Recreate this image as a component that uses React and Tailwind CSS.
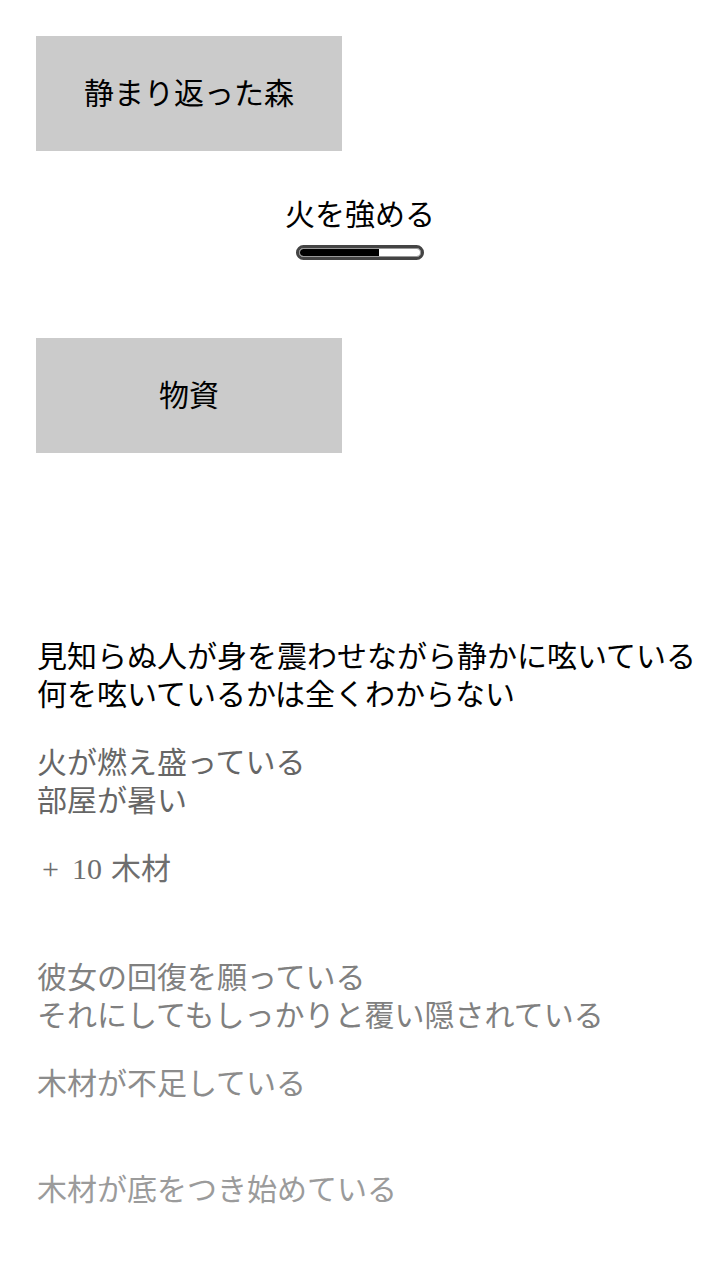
export default function App() {
  const jp = "font-['Noto_Sans_CJK_JP',sans-serif]";
  return (
    <div className={`w-[720px] h-[1280px] bg-white ${jp} text-[30px] leading-[38px] text-black`}>
      <div className="pt-[36px] pl-[36px]">
        <div className="w-[306px] h-[115px] bg-[#cbcbcb] flex items-center justify-center pb-[6px]">静まり返った森</div>
      </div>
      <div className="flex flex-col items-center mt-[42px]">
        <div>火を強める</div>
        <div className="mt-[14px] w-[128px] h-[15px] rounded-full border-[3px] border-[#444] bg-white overflow-hidden p-[1px] shadow-[inset_0_0_0_1px_#999]">
          <div className="h-full w-[66%] bg-black rounded-l-full"></div>
        </div>
      </div>
      <div className="pl-[36px] mt-[78px]">
        <div className="w-[306px] h-[115px] bg-[#cbcbcb] flex items-center justify-center pb-[6px]">物資</div>
      </div>
      <div className="pl-[37px] mt-[182px] flex flex-col gap-[30px]">
        <div className="text-black">
          <div>見知らぬ人が身を震わせながら静かに呟いている</div>
          <div>何を呟いているかは全くわからない</div>
        </div>
        <div className="text-[#666]">
          <div>火が燃え盛っている</div>
          <div>部屋が暑い</div>
        </div>
        <div className="text-[#6e6e6e] pb-[38px]">
          <div className="flex items-baseline">
            <span className="font-['Liberation_Serif',serif] pl-[5px]">+</span>
            <span className="font-['Liberation_Serif',serif] ml-[13px]">10</span>
            <span className="ml-[9px]">木材</span>
          </div>
        </div>
        <div className="text-[#808080]">
          <div>彼女の回復を願っている</div>
          <div>それにしてもしっかりと覆い隠されている</div>
        </div>
        <div className="text-[#8c8c8c] pb-[38px]">
          <div>木材が不足している</div>
        </div>
        <div className="text-[#9b9b9b]">
          <div>木材が底をつき始めている</div>
        </div>
      </div>
    </div>
  );
}
